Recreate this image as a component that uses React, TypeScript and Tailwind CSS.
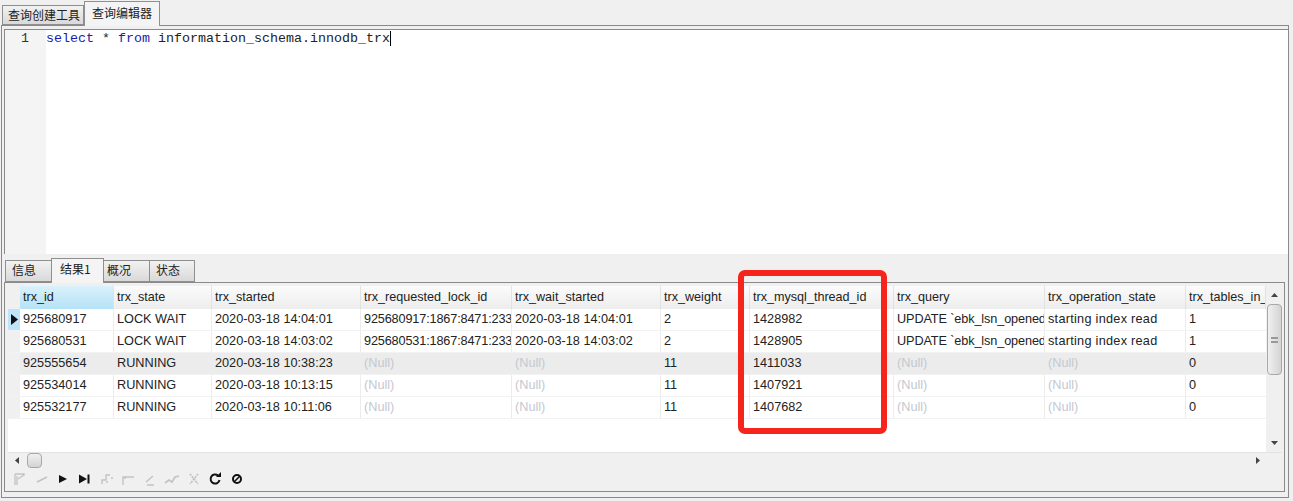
import type { ReactNode } from 'react'

const uiFont = { fontFamily: '"Noto Sans CJK SC"' }

const columns = [
  { name: 'trx_id', width: 'w-[94px]' },
  { name: 'trx_state', width: 'w-[98px]' },
  { name: 'trx_started', width: 'w-[149px]' },
  { name: 'trx_requested_lock_id', width: 'w-[151px]' },
  { name: 'trx_wait_started', width: 'w-[149px]' },
  { name: 'trx_weight', width: 'w-[89px]' },
  { name: 'trx_mysql_thread_id', width: 'w-[144px]' },
  { name: 'trx_query', width: 'w-[151px]' },
  { name: 'trx_operation_state', width: 'w-[141px]' },
  { name: 'trx_tables_in_use', width: 'w-[80px]' },
]

const N = '(Null)'
const rows = [
  ['925680917', 'LOCK WAIT', '2020-03-18 14:04:01', '925680917:1867:8471:233', '2020-03-18 14:04:01', '2', '1428982', 'UPDATE `ebk_lsn_opened', 'starting index read', '1'],
  ['925680531', 'LOCK WAIT', '2020-03-18 14:03:02', '925680531:1867:8471:233', '2020-03-18 14:03:02', '2', '1428905', 'UPDATE `ebk_lsn_opened', 'starting index read', '1'],
  ['925555654', 'RUNNING', '2020-03-18 10:38:23', N, N, '11', '1411033', N, N, '0'],
  ['925534014', 'RUNNING', '2020-03-18 10:13:15', N, N, '11', '1407921', N, N, '0'],
  ['925532177', 'RUNNING', '2020-03-18 10:11:06', N, N, '11', '1407682', N, N, '0'],
]

function Tab({ label, active, className }: { label: string; active?: boolean; className: string }) {
  return (
    <div
      className={`flex items-center border border-[#8f8f8f] text-[12px] leading-none text-[#222] ${
        active ? 'relative z-10 -mb-px border-b-0 bg-[#f4f4f4]' : 'bg-gradient-to-b from-[#f2f2f2] to-[#d9d9d9]'
      } ${className}`}
      style={uiFont}
    >
      {label}
    </div>
  )
}

function trackingFor(value: string) {
  if (value.startsWith('starting')) return 'tracking-[0.27px]'
  if (value.startsWith('UPDATE')) return 'tracking-[-0.12px]'
  if (value.includes(':1867:')) return 'tracking-[-0.15px]'
  return ''
}

function Cell({ value, width, last }: { value: string; width: string; last?: boolean }) {
  return (
    <div
      className={`${width} h-full shrink-0 overflow-hidden whitespace-nowrap pl-[3px] leading-[21px] ${
        last ? '' : 'border-r border-[#ececec]'
      } ${value === N ? 'text-[#c4c8d0]' : 'text-[#222]'} ${trackingFor(value)}`}
    >
      {value}
    </div>
  )
}

function ToolIcon({ children }: { children: ReactNode }) {
  return (
    <svg width="16" height="16" viewBox="0 0 16 16" fill="none" className="shrink-0">
      {children}
    </svg>
  )
}

function Toolbar() {
  const off = '#c2c2c2'
  return (
    <div className="flex h-[22px] shrink-0 items-center gap-[5.7px] bg-[#f0f0f0] pl-[4px]">
      <ToolIcon>
        <path d="M3 14V3M3 3h9v2M5 5v9M6 8l6-4" stroke={off} strokeWidth="1.3" />
      </ToolIcon>
      <ToolIcon>
        <path d="M3 11l10-5" stroke={off} strokeWidth="1.6" />
      </ToolIcon>
      <ToolIcon>
        <path d="M4 4l8 4-8 4z" fill="#111" />
      </ToolIcon>
      <ToolIcon>
        <path d="M2 3.5l8 4.5-8 4.5zM10.5 3.5h2v9h-2z" fill="#111" />
      </ToolIcon>
      <ToolIcon>
        <path d="M3 13v-4h4V4h4M12 7h2M7 11h2" stroke={off} strokeWidth="1.4" />
      </ToolIcon>
      <ToolIcon>
        <path d="M3 14V6h11M5 6v2" stroke={off} strokeWidth="1.4" />
      </ToolIcon>
      <ToolIcon>
        <path d="M4 11l7-6M5 14h7" stroke={off} strokeWidth="1.4" />
      </ToolIcon>
      <ToolIcon>
        <path d="M1 12l4-3 3 2 3-5 4-1" stroke={off} strokeWidth="1.6" />
      </ToolIcon>
      <ToolIcon>
        <path d="M4 3l8 10M12 3L4 13" stroke={off} strokeWidth="1.8" strokeDasharray="2 1" />
      </ToolIcon>
      <ToolIcon>
        <path d="M12.5 9a4.5 4.5 0 1 1-1.5-4.4" stroke="#111" strokeWidth="2" />
        <path d="M9 6h5V1z" fill="#111" />
      </ToolIcon>
      <ToolIcon>
        <circle cx="8" cy="8" r="4" stroke="#111" strokeWidth="2" />
        <path d="M5 11l6-6" stroke="#111" strokeWidth="1.6" />
      </ToolIcon>
    </div>
  )
}

export default function App() {
  return (
    <div className="relative h-[501px] w-[1293px] overflow-hidden bg-[#f0f0f0]">
      {/* top tabs */}
      <div className="flex h-[25px] items-end pl-[2px]">
        <Tab label="查询创建工具" className="h-[20px] w-[82px] justify-center pl-[2px]" />
        <Tab label="查询编辑器" active className="h-[25px] w-[76px] justify-center pb-[3px]" />
      </div>

      <div className="ml-px flex h-[473px] w-[1288px] flex-col border border-[#8a8a8a] pl-[2px] pt-[3px]">
        {/* editor */}
        <div className="flex h-[225px] shrink-0 border-l border-t border-[#8a8a8a] bg-white">
          <div
            className="w-[41px] shrink-0 bg-[#f4f4f4] pr-[17px] pt-px text-right text-[13.33px] leading-[16px] text-[#333]"
            style={{ fontFamily: '"Liberation Mono"' }}
          >
            1
          </div>
          <div
            className="whitespace-pre pt-px text-[13.33px] leading-[16px] text-[#222]"
            style={{ fontFamily: '"Liberation Mono"' }}
          >
            <span className="text-[#1c1ca8]">select</span> * <span className="text-[#1c1ca8]">from</span>{' '}
            <span className="border-r border-black">information_schema.innodb_trx</span>
          </div>
        </div>

        {/* result tabs */}
        <div className="mt-[3px] flex h-[25px] shrink-0 items-end pl-px">
          <Tab label="信息" className="h-[22px] w-[47px] pb-[2px] pl-[6px]" />
          <Tab label="结果1" active className="-ml-px h-[25px] w-[53px] pb-1 pl-[8px]" />
          <Tab label="概况" className="-ml-px h-[22px] w-[47px] pb-[2px] pl-[3px]" />
          <Tab label="状态" className="-ml-px h-[22px] w-[46px] pb-[2px] pl-[6px]" />
        </div>

        {/* result panel */}
        <div className="flex h-[210px] w-[1281px] shrink-0 flex-col border border-[#8a8a8a] pb-px pl-[3px] pr-[2px] pt-[3px]">
          <div className="flex min-h-0 flex-1 bg-white" style={{ fontFamily: '"Liberation Sans"' }}>
            <div className="min-w-0 flex-1 text-[12.7px]">
              <div className="flex h-[23px] text-[12.6px]">
                <div className="w-[12px] shrink-0 bg-[#f0f0f0]" />
                {columns.map((col, i) => (
                  <div
                    key={col.name}
                    className={`${col.width} shrink-0 overflow-hidden whitespace-nowrap border-r border-[#e2e2e2] pl-[3px] leading-[23px] text-[#222] ${
                      i === 0 ? 'bg-gradient-to-b from-[#d9f1fb] to-[#b5e2f6]' : 'bg-gradient-to-b from-[#fbfbfb] to-[#ededed]'
                    }`}
                  >
                    {col.name}
                  </div>
                ))}
              </div>
              {rows.map((row, r) => (
                <div key={row[0]} className={`flex h-[22px] border-b border-[#f2f2f2] ${r === 2 ? 'bg-[#ececec]' : ''}`}>
                  <div
                    className={`flex w-[12px] shrink-0 items-center justify-center ${
                      r === 0 ? 'bg-[#bfe6f8]' : 'bg-[#f0f0f0]'
                    }`}
                  >
                    {r === 0 && (
                      <svg width="7" height="11" viewBox="0 0 7 11">
                        <path d="M0 0l7 5.5L0 11z" fill="#111" />
                      </svg>
                    )}
                  </div>
                  {row.map((value, c) => (
                    <Cell key={c} value={value} width={columns[c].width} last={c === row.length - 1} />
                  ))}
                </div>
              ))}
            </div>

            {/* vertical scrollbar */}
            <div className="flex w-[16px] shrink-0 flex-col items-center bg-[#f0f0f0]">
              <div className="flex h-[18px] items-center justify-center">
                <svg width="7" height="4" viewBox="0 0 7 4">
                  <path d="M3.5 0L7 4H0z" fill="#444" />
                </svg>
              </div>
              <div className="flex h-[71px] w-[15px] items-center justify-center rounded-sm border border-[#a8a8a8] bg-gradient-to-r from-[#f0f0f0] to-[#d4d4d4]">
                <div className="h-[6px] w-[7px] border-y-2 border-[#999]" />
              </div>
              <div className="mt-auto flex h-[18px] items-center justify-center">
                <svg width="7" height="4" viewBox="0 0 7 4">
                  <path d="M0 0h7L3.5 4z" fill="#444" />
                </svg>
              </div>
            </div>
          </div>

          {/* horizontal scrollbar */}
          <div className="flex h-[16px] shrink-0 items-center border-t border-[#e2e2e2] bg-[#f0f0f0] pr-[22px]">
            <svg width="4" height="7" viewBox="0 0 4 7" className="ml-[7px]">
              <path d="M4 0v7L0 3.5z" fill="#444" />
            </svg>
            <div className="ml-[8px] h-[15px] w-[15px] rounded-sm border border-[#a8a8a8] bg-gradient-to-b from-[#f0f0f0] to-[#d4d4d4]" />
            <svg width="4" height="7" viewBox="0 0 4 7" className="ml-auto">
              <path d="M0 0v7l4-3.5z" fill="#444" />
            </svg>
          </div>
          <Toolbar />
        </div>
      </div>

      {/* red annotation drawn over the grid */}
      <div className="absolute left-[738px] top-[270px] h-[164px] w-[149px] rounded-[7px] border-[6px] border-[#f5241c]" />
    </div>
  )
}
